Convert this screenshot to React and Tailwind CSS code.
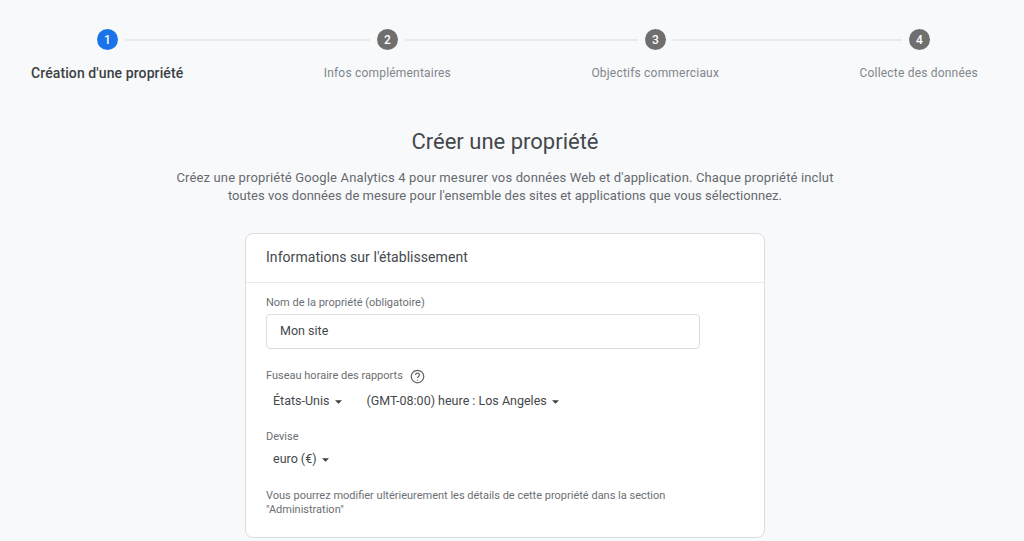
const lines = ['w-[245px]', 'w-[233px]', 'w-[229px]'];

function Caret() {
  return (
    <svg width="7" height="4" viewBox="0 0 8 4" className="ml-[5px] mt-[1px]">
      <path d="M0 0h8L4 4z" fill="#3c4043" />
    </svg>
  );
}

function Circle({ n, active }) {
  return (
    <div
      className={`w-[21px] h-[21px] rounded-full flex items-center justify-center text-[12px] font-medium text-white ${
        active ? 'bg-[#1a73e8]' : 'bg-[#6f6f6f]'
      }`}
    >
      {n}
    </div>
  );
}

function Stepper() {
  return (
    <div>
      <div className="flex items-center pl-[97px] pt-[29px]">
        <Circle n="1" active />
        <div className={`h-[2px] mx-[7px] bg-[#e8eaed] ${lines[0]}`} />
        <Circle n="2" />
        <div className={`h-[2px] mx-[7px] bg-[#e8eaed] ${lines[1]}`} />
        <Circle n="3" />
        <div className={`h-[2px] mx-[7px] bg-[#e8eaed] ${lines[2]}`} />
        <Circle n="4" />
      </div>
      <div className="flex justify-between items-center pl-[31px] pr-[46px] mt-[13px] text-[12px] leading-[20px] tracking-[0.2px] text-[#80868b]">
        <span className="font-medium text-[14px] tracking-[0.1px] text-[#3c4043]">Création d'une propriété</span>
        <span>Infos complémentaires</span>
        <span>Objectifs commerciaux</span>
        <span>Collecte des données</span>
      </div>
    </div>
  );
}

function Intro() {
  return (
    <div className="text-center">
      <h1 className="mt-[45px] text-[22px] leading-[28px] font-normal text-[#44484c]">Créer une propriété</h1>
      <p className="mt-[13px] text-[13px] leading-[18px] tracking-[0.15px] text-[#66696e]">
        Créez une propriété Google Analytics 4 pour mesurer vos données Web et d'application. Chaque propriété inclut
        <br />
        <span className="tracking-[0.05px]">
          toutes vos données de mesure pour l'ensemble des sites et applications que vous sélectionnez.
        </span>
      </p>
    </div>
  );
}

function Card() {
  return (
    <div className="mx-auto mt-[28px] w-[520px] h-[305px] bg-white border border-[#dadce0] rounded-[8px]">
      <div className="h-[49px] border-b border-[#e8eaed] px-[20px] pb-[1px] flex items-center text-[14px] tracking-[0.05px] text-[#44484c]">
        Informations sur l'établissement
      </div>
      <div className="px-[20px]">
        <div className="mt-[13px] text-[11px] leading-[14px] text-[#6b6f74]">Nom de la propriété (obligatoire)</div>
        <div className="mt-[4px] w-[434px] h-[35px] border border-[#dadce0] rounded-[4px] px-[13px] flex items-center text-[12.5px] text-[#44484c]">
          Mon site
        </div>
        <div className="mt-[19px] flex items-center text-[11px] leading-[16px] text-[#6b6f74]">
          Fuseau horaire des rapports
          <svg width="15" height="15" viewBox="0 0 24 24" className="ml-[7px]" fill="none" stroke="#5f6368" strokeWidth="2">
            <circle cx="12" cy="12" r="10" />
            <path d="M9 9.5a3 3 0 1 1 4.6 2.5c-1 .7-1.6 1.3-1.6 2.5" />
            <path d="M12 17v1.5" />
          </svg>
        </div>
        <div className="mt-[7px] pl-[7px] flex items-center text-[12.5px] leading-[20px] text-[#44484c]">
          <span>États-Unis</span>
          <Caret />
          <span className="ml-[25px]">(GMT-08:00) heure : Los Angeles</span>
          <Caret />
        </div>
        <div className="mt-[18px] text-[11px] leading-[16px] text-[#6b6f74]">Devise</div>
        <div className="mt-[4px] pl-[7px] flex items-center text-[12.5px] leading-[20px] text-[#44484c]">
          <span>euro (€)</span>
          <Caret />
        </div>
        <p className="mt-[20px] text-[11px] leading-[14px] text-[#6b6f74]">
          Vous pourrez modifier ultérieurement les détails de cette propriété dans la section
          <br />
          "Administration"
        </p>
      </div>
    </div>
  );
}

export default function App() {
  return (
    <div className="w-[1024px] h-[541px] overflow-hidden bg-[#f8f9fb] font-['Roboto',sans-serif]">
      <Stepper />
      <div className="pr-[14px]">
        <Intro />
        <Card />
      </div>
    </div>
  );
}
